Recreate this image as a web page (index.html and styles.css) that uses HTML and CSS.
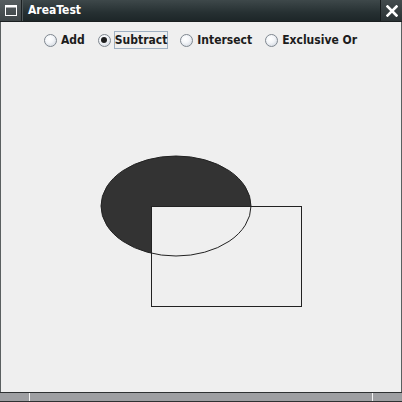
FILE: index.html
```html
<!DOCTYPE html>
<html>
<head>
<meta charset="utf-8">
<link rel="stylesheet" href="styles.css">
</head>
<body>
<div class="window">
  <div class="titlebar">
    <div class="tb-icon">
      <svg width="12" height="11" viewBox="0 0 12 11"><rect x="0.5" y="0.5" width="11" height="10" fill="none" stroke="#fff" stroke-width="1"/><rect x="0" y="0" width="12" height="2.5" fill="#fff"/></svg>
    </div>
    <div class="tb-title">AreaTest</div>
    <div class="tb-close">
      <svg width="12" height="12" viewBox="0 0 12 12"><path d="M1.5 1.5 L10.5 10.5 M10.5 1.5 L1.5 10.5" stroke="#fff" stroke-width="2.6" stroke-linecap="square"/></svg>
    </div>
  </div>
  <div class="content">
    <div class="radios">
      <label class="radio"><span class="dot"></span><span class="lbl">Add</span></label>
      <label class="radio checked"><span class="dot"></span><span class="lbl focus">Subtract</span></label>
      <label class="radio"><span class="dot"></span><span class="lbl">Intersect</span></label>
      <label class="radio"><span class="dot"></span><span class="lbl">Exclusive Or</span></label>
    </div>
    <svg class="canvas" width="400" height="334" viewBox="1 58 400 334">
      <defs>
        <clipPath id="outside">
          <path d="M0 0 H402 V402 H0 Z M151 206 V306 H301 V206 Z" clip-rule="evenodd"/>
        </clipPath>
      </defs>
      <ellipse cx="176" cy="206" rx="75" ry="50" fill="#333333" clip-path="url(#outside)"/>
      <ellipse cx="176" cy="206" rx="75" ry="50" fill="none" stroke="#222" stroke-width="1"/>
      <rect x="151.5" y="206.5" width="150" height="100" fill="none" stroke="#222" stroke-width="1"/>
    </svg>
  </div>
  <div class="bottombar">
    <div class="seg seg-l"></div>
    <div class="seg seg-m"></div>
    <div class="seg seg-r"></div>
  </div>
</div>
</body>
</html>
```

FILE: styles.css
```css
html, body {
  margin: 0;
  padding: 0;
  background: #efefef;
}
.window {
  width: 402px;
  height: 402px;
  display: flex;
  flex-direction: column;
  font-family: "DejaVu Sans Condensed", "DejaVu Sans", sans-serif;
  overflow: hidden;
}
.titlebar {
  height: 22px;
  display: flex;
  align-items: stretch;
  background: linear-gradient(#3e484a, #263032 60%, #1d2628);
  border-bottom: 1px solid #1a1f20;
  box-sizing: border-box;
}
.tb-icon {
  width: 22px;
  display: flex;
  align-items: center;
  justify-content: center;
  background: linear-gradient(#575e60, #3e4547);
  border-right: 1px solid #1a2022;
  box-sizing: border-box;
}
.tb-title {
  flex: 1;
  color: #fff;
  font-weight: bold;
  font-size: 12px;
  line-height: 21px;
  padding-left: 6px;
  box-shadow: inset 1px 0 0 #4f5759;
}
.tb-close {
  width: 22px;
  display: flex;
  align-items: center;
  justify-content: center;
  background: linear-gradient(#434b4d, #2a3234);
  border-left: 1px solid #151a1b;
  box-sizing: border-box;
}
.content {
  flex: 1;
  display: flex;
  flex-direction: column;
  border-left: 1px solid #5a5f60;
  border-right: 1px solid #5a5f60;
  background: #efefef;
  min-height: 0;
}
.radios {
  height: 36px;
  display: flex;
  align-items: center;
  padding-left: 43px;
  box-sizing: border-box;
}
.radio {
  display: flex;
  align-items: center;
  gap: 3px;
  margin-right: 12px;
  font-size: 12px;
  font-weight: bold;
  color: #1c1c1c;
}
.dot {
  width: 11px;
  height: 11px;
  border-radius: 50%;
  border: 1px solid #7f8790;
  background: radial-gradient(circle at 40% 35%, #ffffff 0%, #f4f6f9 40%, #c9d0da 100%);
  position: relative;
}
.checked .dot::after {
  content: "";
  position: absolute;
  left: 2.5px;
  top: 2.5px;
  width: 6px;
  height: 6px;
  border-radius: 50%;
  background: #1e1e1e;
}
.lbl {
  line-height: 14px;
  padding: 1px 0;
  border: 1px solid transparent;
}
.focus {
  border-color: #9fb0c2;
}
.canvas {
  display: block;
  flex: 1;
}
.bottombar {
  height: 10px;
  display: flex;
  background: #9e9fa2;
  border-top: 1px solid #2e3132;
  border-bottom: 1px solid #2e3132;
  box-sizing: border-box;
}
.seg-l {
  width: 29px;
  border-right: 1px solid #f4f4f4;
}
.seg-m {
  flex: 1;
  border-right: 1px solid #f4f4f4;
}
.seg-r {
  width: 29px;
}
```
